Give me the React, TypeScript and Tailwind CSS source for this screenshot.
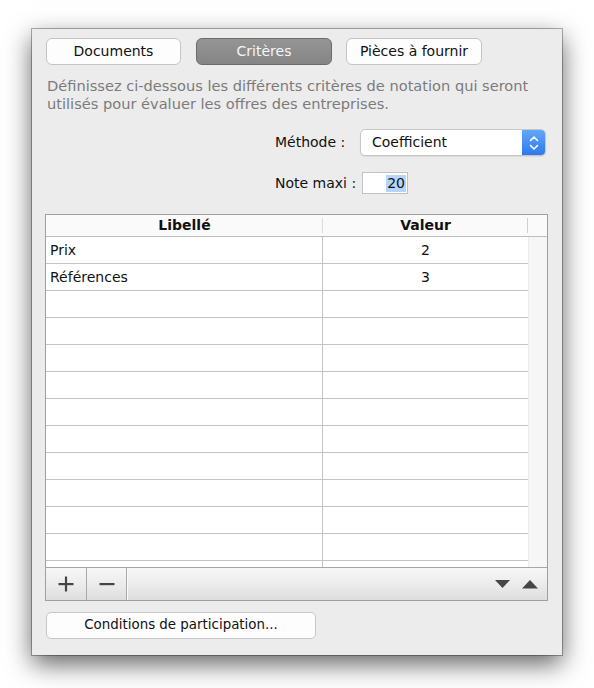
import React from "react";

const font = { fontFamily: '"DejaVu Sans", Verdana, sans-serif' };

function Tab({ label, active, w }: { label: string; active?: boolean; w: string }) {
  return (
    <div
      className={
        "h-[27px] rounded-[6px] flex items-center justify-center text-[14px] border " +
        w +
        " " +
        (active
          ? "bg-gradient-to-b from-[#959595] to-[#858585] border-[#6c6c6c] text-[#f6f6f6]"
          : "bg-[#fdfdfd] border-[#c4c4c4] text-[#111]")
      }
    >
      {label}
    </div>
  );
}

const rows: [string, string][] = [
  ["Prix", "2"],
  ["Références", "3"],
  ["", ""],
  ["", ""],
  ["", ""],
  ["", ""],
  ["", ""],
  ["", ""],
  ["", ""],
  ["", ""],
  ["", ""],
  ["", ""],
  ["", ""],
];

export default function App() {
  return (
    <div className="w-[594px] h-[688px] bg-white overflow-hidden" style={font}>
      <div className="mt-[29px] ml-[32px] w-[530px] h-[626px] bg-[#ececec] shadow-[0_9px_24px_rgba(0,0,0,0.62),0_0_0_1px_rgba(0,0,0,0.3)] pt-[9px] px-[14px] flex flex-col text-[#111]">
        {/* Tabs */}
        <div className="flex items-center">
          <Tab label="Documents" w="w-[135px]" />
          <div className="w-[15px]" />
          <Tab label="Critères" active w="w-[136px]" />
          <div className="w-[14px]" />
          <Tab label="Pièces à fournir" w="w-[136px]" />
        </div>

        {/* Description */}
        <div className="mt-[12px] pl-px text-[14.6px] leading-[18px] text-[#7b7b7b]">
          <div>Définissez ci-dessous les différents critères de notation qui seront</div>
          <div>utilisés pour évaluer les offres des entreprises.</div>
        </div>

        {/* Méthode */}
        <div className="mt-[16px] flex items-center pl-[229px]">
          <div className="w-[85px] text-[14px]">Méthode :</div>
          <div className="w-[186px] h-[27px] flex rounded-[5px] border border-[#c6c6c6] bg-white shadow-[0_1px_1px_rgba(0,0,0,0.08)] overflow-hidden">
            <div className="flex-1 flex items-center pl-[11px] text-[14px]">Coefficient</div>
            <div className="w-[23px] bg-gradient-to-b from-[#63a7f8] to-[#2d78ee] flex items-center justify-center">
              <svg width="12" height="18" viewBox="0 0 12 18" fill="none" stroke="white" strokeWidth="1.6" strokeLinecap="round" strokeLinejoin="round">
                <path d="M2.5 6.5 L6 3 L9.5 6.5" />
                <path d="M2.5 11.5 L6 15 L9.5 11.5" />
              </svg>
            </div>
          </div>
        </div>

        {/* Note maxi */}
        <div className="mt-[16px] flex items-center pl-[229px]">
          <div className="w-[87px] text-[14px]">Note maxi :</div>
          <div className="w-[46px] h-[22px] border border-[#c2c2c2] bg-white flex items-center justify-end pr-px">
            <span className="bg-[#b5d5fd] text-[14px] leading-[17px] px-[1px]">20</span>
          </div>
        </div>

        {/* Table */}
        <div className="mt-[20px] -ml-px w-[503px] h-[387px] border border-[#9f9f9f] bg-white flex flex-col text-[14px]">
          {/* Header */}
          <div className="h-[22px] flex border-b border-[#bdbdbd] bg-[#fafafa] font-bold text-[#111]">
            <div className="w-[277px] flex items-center justify-center relative">
              Libellé
              <div className="absolute right-0 top-[3px] bottom-[3px] w-px bg-[#dcdcdc]" />
            </div>
            <div className="w-[205px] flex items-center justify-center relative">
              Valeur
              <div className="absolute right-0 top-[3px] bottom-[3px] w-px bg-[#cfcfcf]" />
            </div>
            <div className="flex-1" />
          </div>
          {/* Body */}
          <div className="h-[330px] flex overflow-hidden">
            <div className="w-[482px] flex flex-col">
              {rows.map((r, i) => (
                <div key={i} className="h-[27px] shrink-0 flex border-b border-[#c3c3c3]">
                  <div className="w-[277px] border-r border-[#c3c3c3] flex items-center pl-[4px]">{r[0]}</div>
                  <div className="flex-1 flex items-center justify-center">{r[1]}</div>
                </div>
              ))}
            </div>
            <div className="flex-1 bg-[#f6f6f6] border-l border-[#ebebeb]" />
          </div>
          {/* Bottom bar */}
          <div className="flex-1 flex border-t border-[#a6a6a6] bg-gradient-to-b from-[#f7f7f7] via-[#ececec] to-[#dedede]">
            <div className="w-[41px] border-r border-[#a9a9a9] flex items-center justify-center">
              <svg width="16" height="16" viewBox="0 0 16 16">
                <rect x="0.5" y="7" width="15" height="2.2" fill="#454545" />
                <rect x="6.9" y="0.5" width="2.2" height="15" fill="#454545" />
              </svg>
            </div>
            <div className="w-[40px] border-r border-[#a9a9a9] flex items-center justify-center">
              <svg width="16" height="16" viewBox="0 0 16 16">
                <rect x="0.5" y="7" width="15" height="2.2" fill="#454545" />
              </svg>
            </div>
            <div className="flex-1 border-l border-[#fafafa] flex items-center justify-end pr-[9px] gap-[12px]">
              <svg width="15" height="9" viewBox="0 0 15 9">
                <path d="M0 0 L15 0 L7.5 8 Z" fill="#464646" />
              </svg>
              <svg width="16" height="9" viewBox="0 0 16 9">
                <path d="M0 8.5 L16 8.5 L8 0 Z" fill="#464646" />
              </svg>
            </div>
          </div>
        </div>

        {/* Conditions button */}
        <div className="mt-[11px] w-[270px] h-[27px] rounded-[5px] border border-[#c6c6c6] bg-[#fdfdfd] flex items-center justify-center text-[13.4px]">
          Conditions de participation...
        </div>
      </div>
    </div>
  );
}
